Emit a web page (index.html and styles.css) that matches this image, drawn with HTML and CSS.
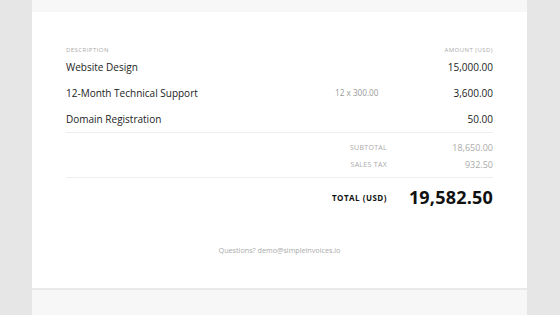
FILE: index.html
```html
<!DOCTYPE html>
<html>
<head>
<meta charset="utf-8">
<link rel="stylesheet" href="styles.css">
</head>
<body>
<div class="page">
  <div class="top-band"></div>
  <div class="sheet">
    <div class="grid head">
      <div class="c-desc">DESCRIPTION</div>
      <div class="c-qty"></div>
      <div class="c-amt">AMOUNT (USD)</div>
    </div>
    <div class="grid item">
      <div class="c-desc">Website Design</div>
      <div class="c-qty"></div>
      <div class="c-amt">15,000.00</div>
    </div>
    <div class="grid item">
      <div class="c-desc">12-Month Technical Support</div>
      <div class="c-qty">12 x 300.00</div>
      <div class="c-amt">3,600.00</div>
    </div>
    <div class="grid item">
      <div class="c-desc">Domain Registration</div>
      <div class="c-qty"></div>
      <div class="c-amt">50.00</div>
    </div>
    <div class="sums">
      <div class="grid sum">
        <div class="c-label">SUBTOTAL</div>
        <div class="c-amt">18,650.00</div>
      </div>
      <div class="grid sum">
        <div class="c-label">SALES TAX</div>
        <div class="c-amt">932.50</div>
      </div>
    </div>
    <div class="grid total">
      <div class="c-label">TOTAL (USD)</div>
      <div class="c-amt">19,582.50</div>
    </div>
    <div class="footer">Questions? demo@simpleinvoices.io</div>
  </div>
  <div class="bottom-band"></div>
</div>
</body>
</html>
```

FILE: styles.css
```css
html, body {
  margin: 0;
  padding: 0;
  background: #e6e6e6;
  height: 315px;
  overflow: hidden;
  font-family: "Open Sans", "DejaVu Sans", sans-serif;
  color: #333;
}
.page {
  width: 495px;
  margin-left: 32px;
}
.top-band {
  height: 12px;
  background: #f7f7f7;
}
.sheet {
  background: #fff;
  height: 276px;
  box-sizing: border-box;
  padding: 34px 34px 0 34px;
}
.bottom-band {
  height: 40px;
  background: #f7f7f7;
  border-top: 2px solid #e9e9e9;
}
.grid {
  display: grid;
  grid-template-columns: 269px 52px 106px;
  align-items: center;
}
.c-amt { text-align: right; }
.head {
  height: 8px;
  line-height: 8px;
  font-size: 6px;
  letter-spacing: 0.45px;
  color: #aaa;
}
.item {
  height: 26px;
  line-height: 26px;
  font-size: 10px;
  color: #222;
}
.item .c-qty {
  color: #999;
  font-size: 8.2px;
  white-space: nowrap;
}
.sums {
  border-top: 1px solid #eee;
  border-bottom: 1px solid #eee;
  padding: 6px 0 4px;
}
.sum {
  height: 17px;
  line-height: 17px;
  color: #aaa;
  font-size: 9px;
}
.sum .c-label {
  grid-column: 1 / 3;
  text-align: right;
  font-size: 7px;
  letter-spacing: 0.3px;
}
.total {
  height: 38px;
}
.total .c-label {
  grid-column: 1 / 3;
  text-align: right;
  font-size: 8px;
  font-weight: 700;
  letter-spacing: 0.5px;
  color: #111;
}
.total .c-amt {
  font-size: 18px;
  font-weight: 700;
  color: #111;
  letter-spacing: 0.2px;
}
.footer {
  margin-top: 28px;
  line-height: 12px;
  text-align: center;
  font-size: 7.2px;
  color: #aaa;
}
```
